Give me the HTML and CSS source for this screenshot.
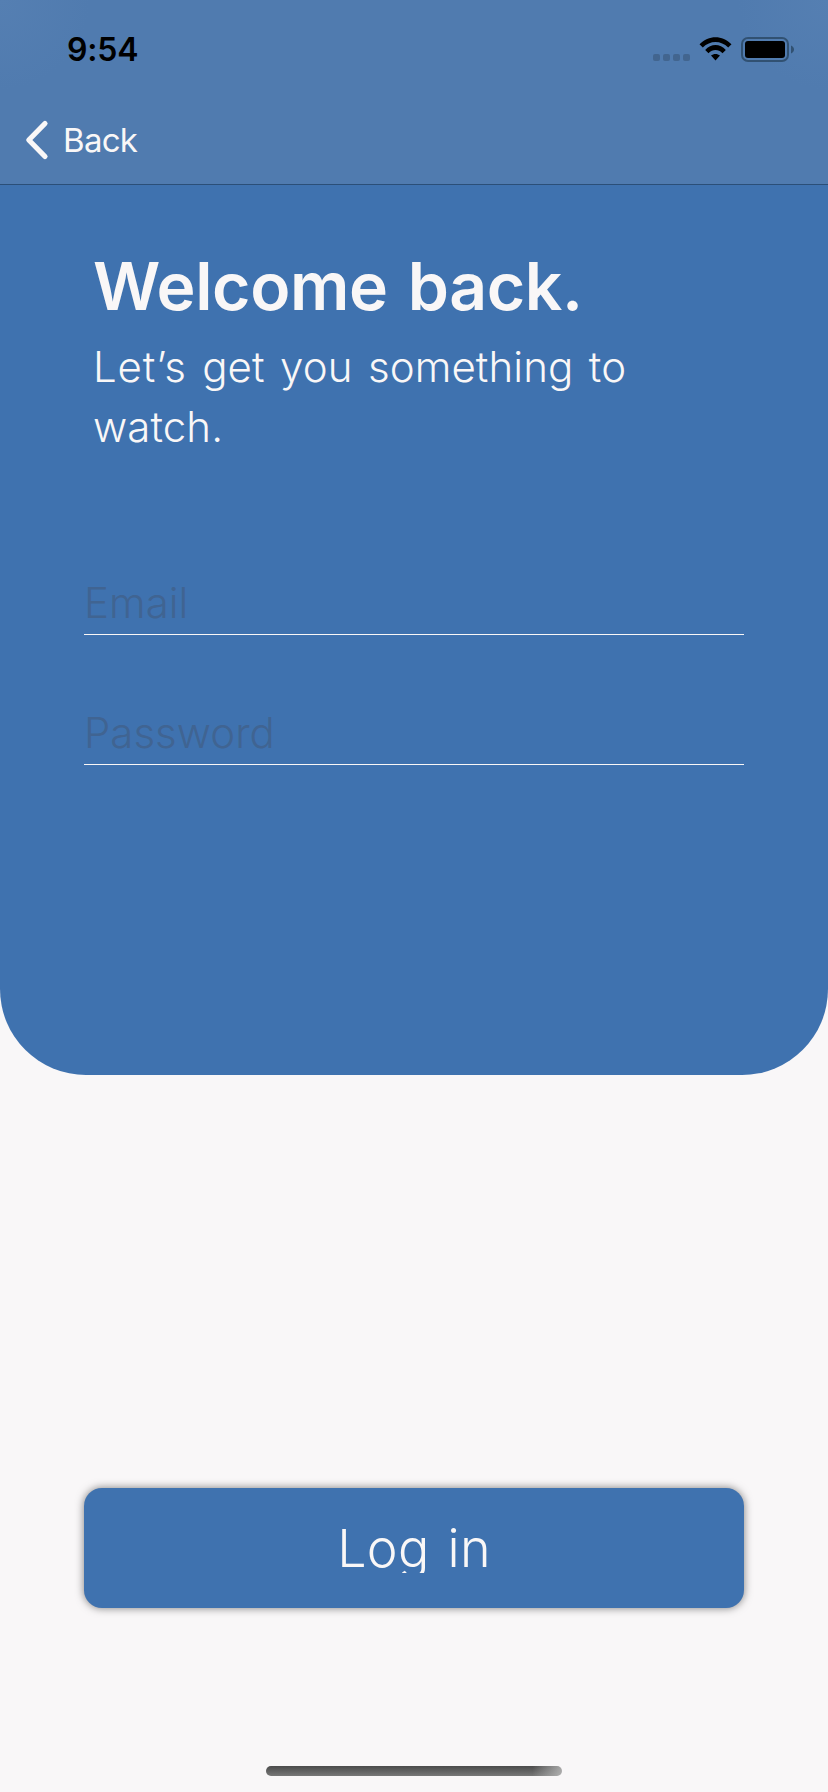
FILE: index.html
```html
<!DOCTYPE html>
<html lang="en">
<head>
<meta charset="utf-8">
<title>Log in</title>
<link rel="stylesheet" href="styles.css">
</head>
<body>
<div class="screen">
  <main class="panel">
    <header class="nav">
      <div class="status">
        <span class="time">9:54</span>
        <svg class="indicators" width="144" height="28" viewBox="0 0 144 28">
          <g fill="#42658f"><rect x="0" y="18" width="7" height="7" rx="2"/><rect x="10" y="18" width="7" height="7" rx="2"/><rect x="20" y="18" width="7" height="7" rx="2"/><rect x="30" y="18" width="7" height="7" rx="2"/></g>
          <path d="M46.5 8.2C55.6-1.2 69.400-1.200 78.500 8.200L75.200 11.600C68 4.200 57 4.200 49.800 11.600ZM52.200 13.900C58 7.500 67 7.500 72.800 13.900L69.500 17.200C65.300 12.800 59.700 12.800 55.500 17.200ZM58 19.600C60.500 17.400 64.500 17.400 67 19.600L62.500 24.600Z" fill="#000"/>
          <rect x="89" y="2" width="46" height="23" rx="6" fill="none" stroke="#315172" stroke-width="2"/>
          <rect x="92" y="5" width="40" height="17" rx="3" fill="#000"/>
          <path d="M138 9.500C142 11 142 16 138 17.500Z" fill="#315172"/>
        </svg>
      </div>
      <a class="back">
        <svg width="26" height="42" viewBox="0 0 26 42"><path d="M21 4.500L4.800 21L21 37.500" fill="none" stroke="#f9f7f7" stroke-width="5.200" stroke-linecap="round" stroke-linejoin="round"/></svg>
        <span class="back-label">Back</span>
      </a>
    </header>
    <h1 class="title">Welcome back.</h1>
    <p class="subtitle"><span class="lead">Let’s</span> get you something to<br>watch.</p>
    <form class="fields">
      <div class="field"><span class="email">Email</span></div>
      <div class="field"><span class="password">Password</span></div>
    </form>
  </main>
  <button class="login"><span class="login-label">Log in</span></button>
  <div class="home"></div>
</div>
</body>
</html>
```
FILE: styles.css
```css
* { box-sizing: border-box; }
body { margin: 0; font-family: Inter, "Liberation Sans", sans-serif; }
.screen { width: 828px; height: 1792px; overflow: hidden; background: #f9f7f8; display: flex; flex-direction: column; align-items: center; }
.panel { width: 828px; height: 1075px; flex: none; background: #3f72af; border-radius: 0 0 86px 86px; color: #f9f7f7; }
.nav { height: 185px; border-bottom: 1px solid #2b4f78; background: radial-gradient(circle at 0 0, #557fb2, transparent 90px), radial-gradient(circle at 100% 0, #557fb2, transparent 90px), #507baf; }
.status { height: 100px; padding: 36px 31px 0 67px; display: flex; justify-content: space-between; align-items: flex-start; }
.time { color: #000; font-size: 32px; line-height: 28px; font-weight: 600; letter-spacing: -0.2px; }
.back { height: 80px; padding-left: 24px; display: flex; align-items: center; }
.back svg { flex: none; }
.back-label { margin-left: 13px; font-size: 33px; line-height: 40px; letter-spacing: -0.7px; font-weight: 400; }
.title { margin: 61px 0 0 93px; font-size: 66px; line-height: 80px; font-weight: 600; letter-spacing: -0.4px; word-spacing: 4px; white-space: nowrap; }
.subtitle { margin: 11px 0 0 93px; font-size: 42px; line-height: 60px; font-weight: 300; letter-spacing: 0.1px; word-spacing: 3.500px; white-space: nowrap; }
.lead { letter-spacing: 0.9px; }
.fields { margin: 98px 84px 0; }
.field { height: 80px; margin-bottom: 50px; border-bottom: 1px solid #f9f7f7; color: #406492; font-size: 42px; line-height: 96px; font-weight: 300; }
.login { width: 660px; height: 120px; margin-top: 413px; flex: none; border: 0; border-radius: 18px; padding: 0; background: #3f72af; color: #f9f7f7; box-shadow: 0 0 8px rgba(0,0,0,.5); font-family: inherit; font-size: 52px; font-weight: 300; letter-spacing: 0.3px; word-spacing: 3px; display: flex; justify-content: center; align-items: flex-start; }
.login-label { margin-top: 36px; height: 49px; line-height: 50px; overflow: hidden; white-space: pre; }
.home { width: 296px; height: 10px; flex: none; margin-top: 158px; border-radius: 5px; background: linear-gradient(90deg, transparent 90%, rgba(190,190,190,.8)), linear-gradient(#4b4b4b, #777); }
```
